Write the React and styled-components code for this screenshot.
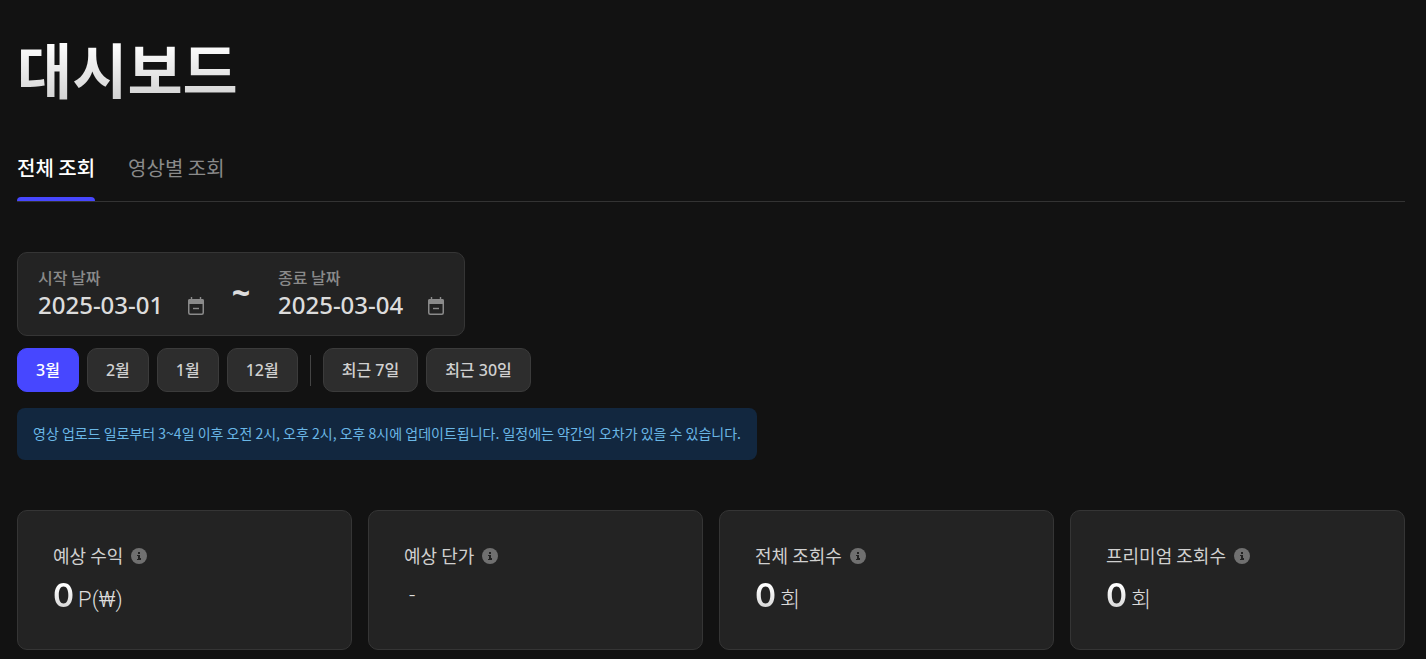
import { useState } from 'react'
import styled, { createGlobalStyle } from 'styled-components'

/* 
  ┌─────────────────────────────────────────────────────────────────────────┐
  │ STYLE                                                                   │
  └─────────────────────────────────────────────────────────────────────────┘
  */

const GlobalStyle = createGlobalStyle`
  * {
    box-sizing: border-box;
  }
  body {
    margin: 0;
    background: #121212;
    color: #fff;
    font-family: 'Noto Sans CJK KR', 'Noto Sans', sans-serif;
  }
  button, input {
    font-family: inherit;
  }
  h1, h2, p {
    margin: 0;
  }
`

const Page = styled.main`
  padding: 24px 21px 9px 17px;
`

const Title = styled.h1`
  width: fit-content;
  font-size: 60px;
  font-weight: 700;
  line-height: 88px;
  background: linear-gradient(180deg, #fff 20%, #d0d0d0 90%);
  background-clip: text;
  color: transparent;
`

const Tabs = styled.nav`
  display: flex;
  gap: 33px;
  margin-top: 34px;
  border-bottom: 1px solid #333;
`

const Tab = styled.button`
  display: flex;
  flex-direction: column;
  padding: 0;
  border: 0;
  background: none;
  color: ${({ $active }) => ($active ? '#fff' : '#8a8a8a')};
  font-size: 20px;
  font-weight: ${({ $active }) => ($active ? 500 : 400)};
  line-height: 44px;
  cursor: pointer;
  &::after {
    content: '';
    width: 100%;
    height: 4px;
    margin-top: 7px;
    border-radius: 4px 4px 0 0;
    background: ${({ $active }) => ($active ? '#4747ff' : 'transparent')};
  }
`

const DateRange = styled.div`
  display: flex;
  width: fit-content;
  margin-top: 50px;
  padding: 12px 20px;
  border: 1px solid #353535;
  border-radius: 10px;
  background: #232323;
`

const DateField = styled.div`
  display: flex;
  flex-direction: column;
  width: 166px;
`

const DateLabel = styled.label`
  color: #8a8a8a;
  font-size: 16px;
  font-weight: 500;
  line-height: 24px;
`

const DateRow = styled.div`
  display: flex;
  align-items: center;
  justify-content: space-between;
  height: 34px;
`

const DateInput = styled.input`
  width: 136px;
  height: 34px;
  padding: 0 0 4px;
  border: 0;
  outline: 0;
  background: none;
  color: #dcdcdc;
  && {
    font-family: 'Noto Sans', sans-serif;
  }
  font-size: 24px;
  font-weight: 500;
`

const IconButton = styled.button`
  display: flex;
  padding: 0;
  border: 0;
  background: none;
  color: #8a8a8a;
  cursor: pointer;
`

const Tilde = styled.span`
  width: 74px;
  color: #dcdcdc;
  font-family: 'Noto Sans', sans-serif;
  font-size: 32px;
  font-weight: 800;
  line-height: 56px;
  text-align: center;
`

const Filters = styled.div`
  display: flex;
  align-items: center;
  gap: 8px;
  margin-top: 12px;
`

const FilterButton = styled.button`
  height: 44px;
  padding: 0 18px 2px;
  border: 1px solid ${({ $active }) => ($active ? '#4747ff' : '#3b3b3b')};
  border-radius: 10px;
  background: ${({ $active }) => ($active ? '#4747ff' : '#2d2d2d')};
  color: ${({ $active }) => ($active ? '#fff' : '#d0d0d0')};
  && {
    font-family: 'Noto Sans', 'Noto Sans CJK KR', sans-serif;
  }
  font-size: 16px;
  font-weight: 500;
  cursor: pointer;
`

const Divider = styled.span`
  width: 1px;
  height: 31px;
  margin: 0 4px;
  background: #444;
`

const Notice = styled.p`
  width: fit-content;
  margin-top: 16px;
  padding: 13px 16px 15px;
  border-radius: 8px;
  background: #12273f;
  color: #6ab7e6;
  font-size: 14px;
  line-height: 24px;
`

const Cards = styled.section`
  display: grid;
  grid-template-columns: repeat(4, 1fr);
  gap: 16px;
  margin-top: 50px;
`

const Card = styled.article`
  height: 140px;
  padding: 30px 35px;
  border: 1px solid #353535;
  border-radius: 10px;
  background: #232323;
`

const CardTitle = styled.div`
  display: flex;
  align-items: center;
  gap: 8px;
  color: #d0d0d0;
  h2 {
    font-size: 18px;
    font-weight: 400;
    line-height: 28px;
  }
`

const CardValue = styled.p`
  display: flex;
  align-items: baseline;
  gap: 4px;
  line-height: 54px;
`

const Amount = styled.strong`
  min-width: 1px;
  font-family: Inter, sans-serif;
  font-size: 32px;
  font-weight: 600;
  background: linear-gradient(180deg, #fff 30%, #d0d0d0 80%);
  background-clip: text;
  color: transparent;
`

const Unit = styled.span`
  color: #dcdcdc;
  font-family: Roboto, 'Noto Sans CJK KR', sans-serif;
  font-size: 22px;
  font-weight: 300;
`

/* 
  ┌─────────────────────────────────────────────────────────────────────────┐
  │ JSX                                                                     │
  └─────────────────────────────────────────────────────────────────────────┘
 */
const CalendarIcon = () => (
  <svg width="16" height="18" viewBox="0 0 16 18" fill="none" aria-hidden="true">
    <path d="M3.5 0v3M12.5 0v3" stroke="currentColor" strokeWidth="1.4" />
    <path d="M2 2h12a2 2 0 0 1 2 2v3H0V4a2 2 0 0 1 2-2Z" fill="currentColor" />
    <rect x=".75" y="2.75" width="14.5" height="14.5" rx="1.5" stroke="currentColor" strokeWidth="1.5" />
    <path d="M5 11.5h6" stroke="currentColor" strokeWidth="1.4" />
  </svg>
)

const InfoIcon = () => (
  <svg width="16" height="18" viewBox="0 0 16 18" aria-hidden="true">
    <circle cx="8" cy="10" r="8" fill="#707070" />
    <path d="M7 6h2v2H7zM6 9h3v3h1v2H6v-1h1v-3H6z" fill="#232323" />
  </svg>
)

const DatePicker = ({ id, label, value, onChange }) => (
  <DateField>
    <DateLabel htmlFor={id}>{label}</DateLabel>
    <DateRow>
      <DateInput id={id} value={value} onChange={(e) => onChange(e.target.value)} />
      <IconButton type="button" aria-label={`${label} 선택`}>
        <CalendarIcon />
      </IconButton>
    </DateRow>
  </DateField>
)

const tabs = ['전체 조회', '영상별 조회']
const months = ['3월', '2월', '1월', '12월']
const recents = ['최근 7일', '최근 30일']
const stats = [
  { title: '예상 수익', amount: '0', unit: 'P(₩)' },
  { title: '예상 단가', amount: '', unit: '-' },
  { title: '전체 조회수', amount: '0', unit: '회' },
  { title: '프리미엄 조회수', amount: '0', unit: '회' },
]

const App = () => {
  const [tab, setTab] = useState(tabs[0])
  const [period, setPeriod] = useState(months[0])
  const [start, setStart] = useState('2025-03-01')
  const [end, setEnd] = useState('2025-03-04')

  const renderFilter = (name) => (
    <FilterButton key={name} type="button" $active={period === name} onClick={() => setPeriod(name)}>
      {name}
    </FilterButton>
  )

  return (
    <>
      <GlobalStyle />
      <Page>
        <Title>대시보드</Title>
        <Tabs>
          {tabs.map((name) => (
            <Tab key={name} type="button" $active={tab === name} onClick={() => setTab(name)}>
              {name}
            </Tab>
          ))}
        </Tabs>
        <DateRange>
          <DatePicker id="start" label="시작 날짜" value={start} onChange={setStart} />
          <Tilde>~</Tilde>
          <DatePicker id="end" label="종료 날짜" value={end} onChange={setEnd} />
        </DateRange>
        <Filters>
          {months.map(renderFilter)}
          <Divider />
          {recents.map(renderFilter)}
        </Filters>
        <Notice>
          영상 업로드 일로부터 3~4일 이후 오전 2시, 오후 2시, 오후 8시에 업데이트됩니다. 일정에는 약간의 오차가 있을 수
          있습니다.
        </Notice>
        <Cards>
          {stats.map(({ title, amount, unit }) => (
            <Card key={title}>
              <CardTitle>
                <h2>{title}</h2>
                <InfoIcon />
              </CardTitle>
              <CardValue>
                <Amount>{amount}</Amount>
                <Unit>{unit}</Unit>
              </CardValue>
            </Card>
          ))}
        </Cards>
      </Page>
    </>
  )
}

export default App
